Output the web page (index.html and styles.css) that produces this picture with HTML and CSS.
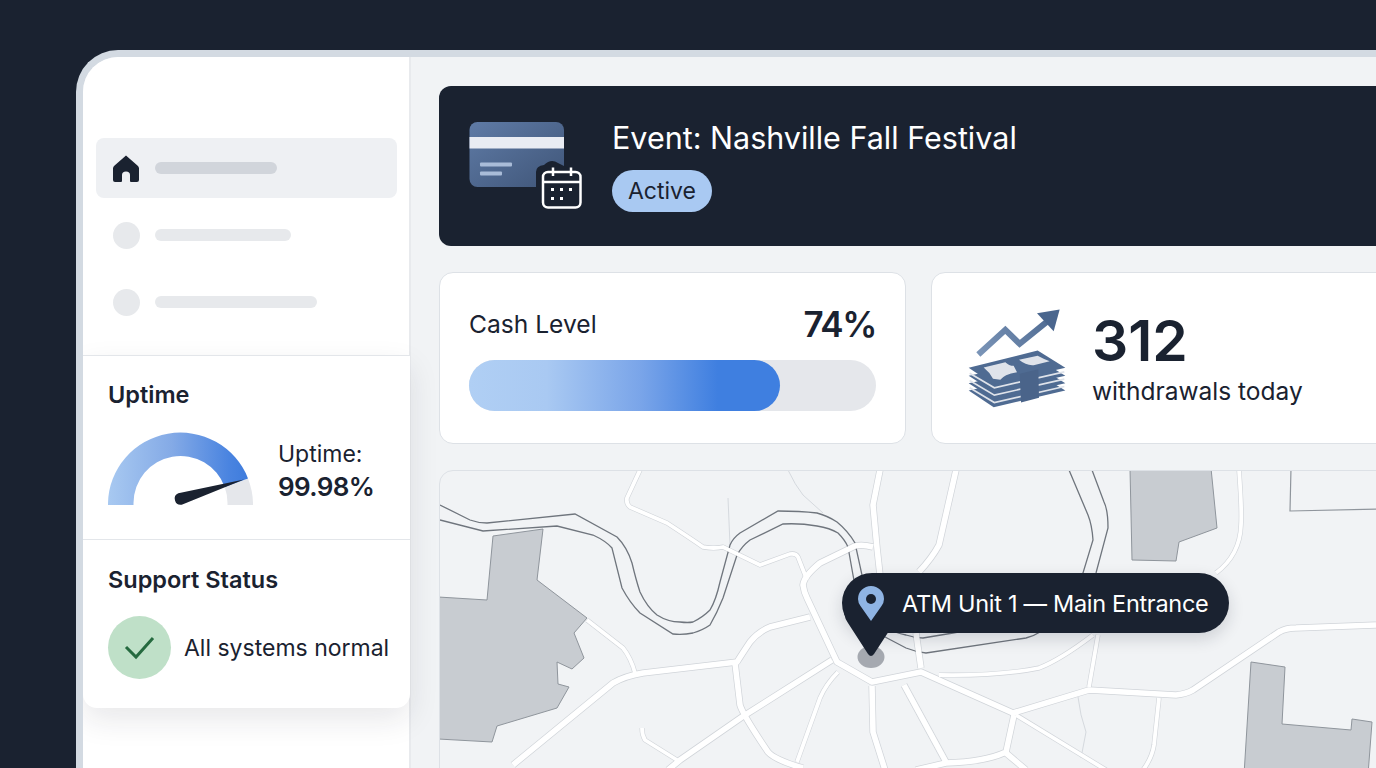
FILE: index.html
```html
<!DOCTYPE html>
<html lang="en">
<head>
    <meta charset="UTF-8">
    <meta name="viewport" content="width=device-width, initial-scale=1.0">
    <title>ATM Event Dashboard</title>
    <link rel="stylesheet" href="styles.css">
</head>
<body>
    <div class="frame">
        <aside class="sidebar">
            <nav class="nav">
                <div class="nav-item active">
                    <svg class="home-icon" viewBox="0 0 26 27">
                        <path d="M13 0.5 L25 11 Q26 12 26 13.5 V25 Q26 27 24 27 H18 Q17 27 17 26 V20 Q17 16.5 13 16.5 Q9 16.5 9 20 V26 Q9 27 8 27 H2 Q0 27 0 25 V13.5 Q0 12 1 11 Z"/>
                    </svg>
                    <span class="nav-bar bar-dark"></span>
                </div>
                <div class="nav-item">
                    <span class="nav-dot"></span>
                    <span class="nav-bar bar-medium"></span>
                </div>
                <div class="nav-item">
                    <span class="nav-dot"></span>
                    <span class="nav-bar bar-long"></span>
                </div>
            </nav>

            <div class="panel">
                <section class="uptime-section">
                    <h2>Uptime</h2>
                    <div class="uptime-row">
                        <svg class="gauge" viewBox="108 431 146 76">
                            <defs>
                                <linearGradient id="gauge-fill" gradientUnits="userSpaceOnUse" x1="108" y1="480" x2="250" y2="480">
                                    <stop offset="0" stop-color="#a8c9f1"/>
                                    <stop offset="0.45" stop-color="#84aae6"/>
                                    <stop offset="0.85" stop-color="#4a84e0"/>
                                    <stop offset="1" stop-color="#3d7bdc"/>
                                </linearGradient>
                            </defs>
                            <path class="gauge-rest" d="M253 505 V503 A72.5 72 0 0 0 248 478.4 L224.7 487 A47 47 0 0 1 227.5 503 V505 Z"/>
                            <path fill="url(#gauge-fill)" d="M108 505 V503 A72.5 72 0 0 1 248 478.4 L224.7 487 A47 47 0 0 0 133.5 503 V505 Z"/>
                            <path class="gauge-needle" d="M244 479.5 L181.7 504.7 A6 6 0 0 1 178.3 493.3 Z"/>
                        </svg>
                        <div class="uptime-text">
                            <span class="uptime-label">Uptime:</span>
                            <strong>99.98%</strong>
                        </div>
                    </div>
                </section>
                <section class="support-section">
                    <h2>Support Status</h2>
                    <div class="support-row">
                        <span class="check-circle">
                            <svg viewBox="0 0 63 63">
                                <path d="M18 31 L28 41 L45 22"/>
                            </svg>
                        </span>
                        <span class="support-text">All systems normal</span>
                    </div>
                </section>
            </div>
        </aside>

        <main class="content">
            <header class="banner">
                <svg class="banner-icon" viewBox="468 120 116 90">
                    <defs>
                        <linearGradient id="card-fill" x1="0" y1="0" x2="1" y2="1">
                            <stop offset="0" stop-color="#5f7ba6"/>
                            <stop offset="1" stop-color="#3f5578"/>
                        </linearGradient>
                    </defs>
                    <rect x="469.5" y="122" width="94.5" height="65" rx="8" fill="url(#card-fill)"/>
                    <rect x="469.5" y="137" width="94.5" height="11.5" fill="#e9ecf3"/>
                    <rect x="480" y="162.5" width="32" height="4" rx="1" fill="#a9bcd8"/>
                    <rect x="480" y="171.5" width="22" height="4" rx="1" fill="#a9bcd8"/>
                    <path class="banner-notch" d="M536 192 V172 Q536 166 544 165 Q551 158 558 163 L568 168 V192 Z"/>
                    <g class="calendar">
                        <rect x="543" y="172" width="37.5" height="35.5" rx="5"/>
                        <path d="M543 182 H580.5 M553 167.5 V176 M571 167.5 V176"/>
                    </g>
                    <g class="calendar-dots">
                        <rect x="551" y="188" width="3" height="3"/>
                        <rect x="560" y="188" width="3" height="3"/>
                        <rect x="569" y="188" width="3" height="3"/>
                        <rect x="551" y="197" width="3" height="3"/>
                        <rect x="560" y="197" width="3" height="3"/>
                    </g>
                </svg>
                <div class="banner-text">
                    <h1>Event: Nashville Fall Festival</h1>
                    <span class="status-pill">Active</span>
                </div>
            </header>

            <div class="stats-row">
                <section class="stat-card cash-card">
                    <div class="cash-head">
                        <span class="cash-label">Cash Level</span>
                        <span class="cash-value">74%</span>
                    </div>
                    <div class="cash-track">
                        <div class="cash-fill" style="width: 76.4%"></div>
                    </div>
                </section>
                <section class="stat-card withdrawals-card">
                    <svg class="money-icon" viewBox="50 50 300 305">
                        <defs>
                            <linearGradient id="arrow-fill" gradientUnits="userSpaceOnUse" x1="80" y1="190" x2="328" y2="60">
                                <stop offset="0" stop-color="#7b95b8"/>
                                <stop offset="1" stop-color="#4a668e"/>
                            </linearGradient>
                        </defs>
                        <path class="arrow-line" d="M84 192 L165 118 L208 160 L292 92"/>
                        <path fill="#4a668e" d="M260 68 L328 57 L310 122 Z"/>
                        <g class="money-sheets">
                            <path d="M55 300 L130 350 L345 300 L270 254 Z"/>
                            <path class="sheet-edge" d="M58 292 L132 336 L342 288"/>
                            <path d="M55 278 L130 326 L345 278 L270 232 Z"/>
                            <path class="sheet-edge" d="M58 270 L132 314 L342 266"/>
                            <path d="M55 256 L130 304 L345 256 L270 210 Z"/>
                            <path class="sheet-edge" d="M58 248 L132 292 L342 244"/>
                            <path d="M55 232 L130 282 L345 232 L262 180 Z"/>
                        </g>
                        <path fill="#dfe3ea" d="M100 231 L165 215 Q176 226 190 226 L200 245 Q160 252 150 268 L128 265 Q118 245 100 231 Z"/>
                        <path fill="#dfe3ea" d="M206 208 L262 196 Q278 205 298 212 L250 224 Q228 226 206 208 Z"/>
                        <path fill="#4a648a" d="M208 250 L264 236 L266 322 L212 336 Z"/>
                    </svg>
                    <div class="withdrawals-text">
                        <span class="withdrawals-value">312</span>
                        <span class="withdrawals-label">withdrawals today</span>
                    </div>
                </section>
            </div>

            <section class="map">
                <svg class="map-canvas" viewBox="440 471 975 330">
                    <defs>
                        <g id="main-roads">
                            <path d="M873 547 Q862 544 855 546 L820 563 Q804 576 803 585 Q804 592 807 598 L837 662 L872 682 L921 672 L1013 713 L1089 690 L1176 695 Q1186 694 1193 690 L1279 632 Q1286 628 1296 628 L1376 625"/>
                            <path d="M880 470 L873 505 L877 548 L880 575"/>
                            <path d="M916 633 L921 668"/>
                            <path d="M956 470 L939 545 Q932 558 919 572"/>
                            <path d="M810 617 L770 627 Q758 632 750 642 Q742 654 737 662 L643 673 Q625 676 613 683 L513 765"/>
                            <path d="M735 663 L740 705 Q743 715 768 752 Q775 760 803 768"/>
                            <path d="M832 660 L742 717 L680 760 L668 770"/>
                            <path d="M872 686 L873 732 L885 770"/>
                            <path d="M1014 715 L1006 752 Q985 762 946 763 L916 770"/>
                            <path d="M1006 753 L1026 770"/>
                            <path d="M904 685 L946 762"/>
                        </g>
                        <g id="minor-roads">
                            <path d="M640 470 L627 498 Q626 504 630 507 L667 523 Q690 538 703 547 Q714 549 723 547 L760 565 L790 554 Q796 553 798 557 L807 580"/>
                            <path d="M587 620 L623 648 Q631 658 635 673"/>
                            <path d="M642 728 Q642 735 645 740 L677 760"/>
                            <path d="M838 672 Q826 684 820 698 L797 762"/>
                            <path d="M1239 470 Q1242 510 1241 525 Q1240 555 1216 573"/>
                            <path d="M1093 635 Q1060 660 1039 668 Q1000 676 939 675"/>
                            <path d="M1098 635 L1089 687"/>
                            <path d="M1016 715 L1106 770"/>
                            <path d="M1159 698 L1154 745 Q1152 758 1143 770"/>
                        </g>
                    </defs>

                    <path class="block" d="M493 536 L543 529 L537 580 L587 618 L574 633 L584 658 L572 669 L557 662 L558 684 L569 687 L557 708 L497 726 L492 742 L438 739 V597 L487 600 Z"/>
                    <path class="block" d="M1130 468 H1211 L1217 528 L1179 542 L1176 561 L1132 560 Z"/>
                    <path class="block" d="M1251 662 L1285 667 L1282 724 L1351 730 L1352 719 L1372 722 L1368 775 H1244 Z"/>
                    <path class="block-outline" d="M1291 468 L1290 511 L1380 509"/>

                    <path class="faint-road" d="M788 470 Q795 485 803 495 L823 513"/>
                    <path class="faint-road" d="M728 498 L730 545"/>
                    <path class="faint-road" d="M1078 697 Q1080 715 1086 732 L1081 758"/>

                    <use class="road-edge main" href="#main-roads"/>
                    <use class="road-edge minor" href="#minor-roads"/>

                    <path class="river" d="M440 505 L470 520 Q478 523 487 523 L575 514 L617 537 Q627 547 632 563 Q636 580 640 592 Q647 607 657 615 Q668 622 680 622 Q688 623 693 622 Q703 617 710 610 Q716 600 720 582 L730 545 Q733 538 740 533 L778 511 Q800 511 817 513 Q828 516 837 522 Q848 531 855 543 L862 575 L868 612 Q880 630 906 635 Q915 638 923 638 L953 633 L1075 610 L1096 573 L1108 528 Q1108 510 1104 502 L1092 470"/>
                    <path class="river" d="M440 520 L483 531 L557 526 L593 535 Q606 541 612 548 L622 588 Q630 603 640 613 L673 634 Q683 635 693 633 Q703 630 710 625 Q717 613 723 598 L737 555 Q742 546 750 540 L783 524 Q800 523 817 526 Q830 528 838 533 Q845 540 848 547 L853 575 L860 612 Q870 630 887 638 L906 648 Q916 652 926 653 L1026 638 Q1034 636 1040 632 L1083 573 L1093 540 Q1092 525 1088 515 L1069 470"/>

                    <use class="road-fill main" href="#main-roads"/>
                    <use class="road-fill minor" href="#minor-roads"/>

                    <ellipse class="pin-ground" cx="871" cy="657" rx="13.5" ry="11"/>
                </svg>

                <div class="map-tooltip">
                    <svg class="tooltip-tail" viewBox="0 0 50 90">
                        <path d="M1 30 L2 40 Q3 46 6 50 L26 81 Q29 85 32 81 L47 58 L47 30 Z"/>
                    </svg>
                    <svg class="tooltip-pin" viewBox="0 0 26 35">
                        <path fill="#8fb4e3" d="M13 35 L2.5 20 Q0 16.5 0 13 A13 13 0 0 1 26 13 Q26 16.5 23.5 20 Z"/>
                        <circle cx="13" cy="13" r="5" fill="#1a2230"/>
                    </svg>
                    <span>ATM Unit 1 — Main Entrance</span>
                </div>
            </section>
        </main>
    </div>
</body>
</html>
```

FILE: styles.css
```css
body {
    font-family: 'Inter', 'Liberation Sans', sans-serif;
    background-color: #1a2230;
    color: #1a2230;
    margin: 0;
    height: 100vh;
    overflow: hidden;
}

h1, h2 {
    margin: 0;
}

.frame {
    display: flex;
    width: 1340px;
    height: 800px;
    margin: 50px 0 0 76px;
    background-color: #f1f3f5;
    border: 7px solid #d3dae2;
    border-right: none;
    border-bottom: none;
    border-radius: 42px 0 0 0;
    overflow: hidden;
}

/* sidebar */
.sidebar {
    width: 326px;
    flex-shrink: 0;
    background-color: #fff;
    border-right: 2px solid #e8eaed;
}

.nav {
    display: flex;
    flex-direction: column;
    gap: 7px;
    padding: 81px 12px 23px 13px;
}

.nav-item {
    display: flex;
    align-items: center;
    gap: 16px;
    height: 60px;
    padding-left: 17px;
    border-radius: 8px;
}

.nav-item.active {
    background-color: #eef0f3;
}

.home-icon {
    width: 26px;
    height: 27px;
    fill: #1a2230;
}

.nav-dot {
    width: 27px;
    height: 27px;
    margin-right: -1px;
    border-radius: 50%;
    background-color: #e7e9ec;
}

.nav-bar {
    height: 12px;
    border-radius: 6px;
    background-color: #e7e9ec;
}

.bar-dark {
    width: 122px;
    background-color: #d1d5db;
}

.bar-medium {
    width: 136px;
}

.bar-long {
    width: 162px;
}

.panel {
    position: relative;
    width: 327px;
    background-color: #fff;
    border-radius: 0 0 14px 14px;
    border-top: 1px solid #e3e6ea;
    box-shadow: 0 12px 30px rgba(26, 34, 48, 0.1);
}

.panel h2 {
    font-size: 23.5px;
    font-weight: 600;
    line-height: 28px;
}

.uptime-section {
    height: 184px;
    box-sizing: border-box;
    padding: 25px 25px 0 25px;
    border-bottom: 1px solid #e3e6ea;
}

.uptime-row {
    display: flex;
    align-items: flex-start;
    gap: 24px;
    margin-top: 22px;
}

.gauge {
    width: 146px;
    height: 76px;
}

.gauge-rest {
    fill: #e5e7eb;
}

.gauge-needle {
    fill: #1a2230;
}

.uptime-text {
    display: flex;
    flex-direction: column;
    gap: 1px;
    padding-top: 8px;
}

.uptime-label {
    font-size: 23px;
    line-height: 30px;
}

.uptime-text strong {
    font-size: 26px;
    font-weight: 600;
    letter-spacing: -0.6px;
    line-height: 34px;
}

.support-section {
    height: 168px;
    box-sizing: border-box;
    padding: 26px 25px 0 25px;
}

.support-row {
    display: flex;
    align-items: center;
    gap: 13px;
    margin-top: 22px;
}

.check-circle {
    width: 63px;
    height: 63px;
    flex-shrink: 0;
    border-radius: 50%;
    background-color: #bfe0c8;
}

.check-circle svg {
    display: block;
    fill: none;
    stroke: #256a3f;
    stroke-width: 3;
}

.support-text {
    font-size: 23px;
    white-space: nowrap;
}

/* main column */
.content {
    flex: 1;
    display: flex;
    flex-direction: column;
    gap: 26px;
    padding: 29px 0 0 28px;
    min-width: 0;
}

.banner {
    display: flex;
    align-items: center;
    gap: 29px;
    height: 160px;
    flex-shrink: 0;
    padding-left: 29px;
    background-color: #1a2230;
    border-radius: 12px;
}

.banner-icon {
    width: 116px;
    height: 90px;
    margin-bottom: 2px;
}

.banner-notch {
    fill: #1a2230;
}

.calendar {
    fill: none;
    stroke: #fff;
    stroke-width: 2.5;
}

.calendar-dots {
    fill: #fff;
}

.banner-text {
    display: flex;
    flex-direction: column;
    align-items: flex-start;
    gap: 13px;
    margin: 0 0 2px -1px;
}

.banner-text h1 {
    color: #fff;
    font-size: 30.5px;
    font-weight: 400;
    line-height: 38px;
    white-space: nowrap;
}

.status-pill {
    padding: 6px 16px;
    font-size: 23px;
    line-height: 30px;
    border-radius: 21px;
    background-color: #a9c9f2;
}

.stats-row {
    display: grid;
    grid-template-columns: 467px 1fr;
    gap: 25px;
    flex-shrink: 0;
}

.stat-card {
    height: 172px;
    box-sizing: border-box;
    background-color: #fff;
    border: 1px solid #dde1e6;
    border-radius: 14px;
}

.cash-card {
    padding: 29px 29px;
}

.cash-head {
    display: flex;
    justify-content: space-between;
    align-items: center;
    height: 44px;
}

.cash-label {
    font-size: 24.6px;
}

.cash-value {
    font-size: 35px;
    font-weight: 600;
    letter-spacing: -1.4px;
}

.cash-track {
    height: 51px;
    margin-top: 14px;
    border-radius: 26px;
    background-color: #e5e7eb;
}

.cash-fill {
    height: 100%;
    border-radius: 26px;
    background: linear-gradient(90deg, #b0cff4 0%, #a9c9f2 25%, #7aa5e9 55%, #3f7fe0 80%, #3f7fe0 100%);
}

.withdrawals-card {
    display: flex;
    align-items: center;
    gap: 25px;
    padding-left: 35px;
}

.money-icon {
    width: 100px;
    height: 102px;
    flex-shrink: 0;
}

.arrow-line {
    fill: none;
    stroke: url(#arrow-fill);
    stroke-width: 18;
}

.money-sheets {
    fill: #4f6b92;
}

.sheet-edge {
    fill: none;
    stroke: #dfe3ea;
    stroke-width: 5;
}

.withdrawals-text {
    display: flex;
    flex-direction: column;
}

.withdrawals-value {
    font-size: 57px;
    font-weight: 600;
    line-height: 62px;
}

.withdrawals-label {
    margin-top: 3px;
    font-size: 24.5px;
    line-height: 32px;
    white-space: nowrap;
}

/* map */
.map {
    position: relative;
    height: 340px;
    flex-shrink: 0;
    background-color: #f1f3f5;
    border: 1px solid #dde1e6;
    border-radius: 14px;
    overflow: hidden;
}

.map-canvas {
    display: block;
    width: 975px;
    height: 330px;
}

.block {
    fill: #c8ccd1;
    stroke: #8f959c;
    stroke-width: 1;
}

.block-outline {
    fill: none;
    stroke: #8f959c;
    stroke-width: 1.2;
}

.faint-road {
    fill: none;
    stroke: #d5d9de;
    stroke-width: 1;
}

.road-edge, .road-fill {
    fill: none;
    stroke-linejoin: round;
}

.road-edge {
    stroke: #d0d4d9;
}

.road-fill {
    stroke: #fff;
}

.road-edge.main {
    stroke-width: 7;
}

.road-fill.main {
    stroke-width: 5.6;
}

.road-edge.minor {
    stroke-width: 5;
}

.road-fill.minor {
    stroke-width: 3.8;
}

.river {
    fill: none;
    stroke: #6f757d;
    stroke-width: 1.3;
}

.pin-ground {
    fill: #a5a9b0;
}

.map-tooltip {
    position: absolute;
    left: 402px;
    top: 102px;
    display: flex;
    align-items: center;
    gap: 18px;
    height: 60px;
    padding: 0 21px 0 16px;
    color: #fff;
    font-size: 23.5px;
    letter-spacing: -0.3px;
    white-space: nowrap;
    background-color: #1a2230;
    border-radius: 30px;
    box-shadow: 0 6px 16px rgba(26, 34, 48, 0.16);
}

.tooltip-tail {
    position: absolute;
    left: 0;
    top: 0;
    width: 50px;
    height: 90px;
    fill: #1a2230;
}

.tooltip-pin {
    position: relative;
    width: 26px;
    height: 35px;
}
```
